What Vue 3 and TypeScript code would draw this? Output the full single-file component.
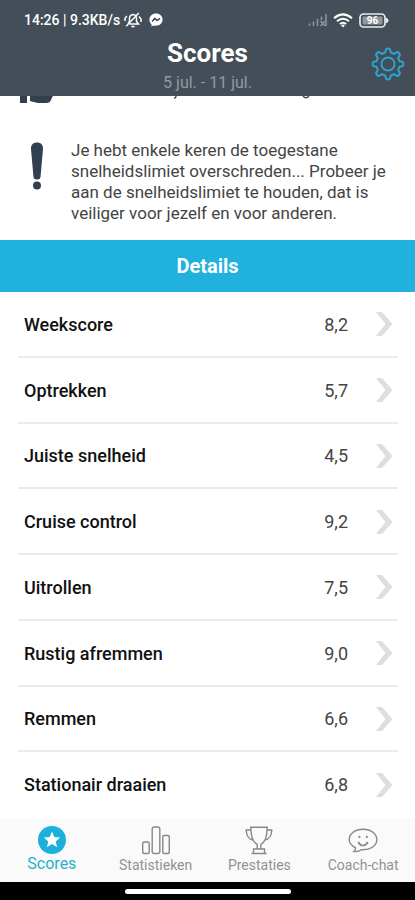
<script setup lang="ts">
interface Score {
  label: string
  value: string
}

const scores: Score[] = [
  { label: 'Weekscore', value: '8,2' },
  { label: 'Optrekken', value: '5,7' },
  { label: 'Juiste snelheid', value: '4,5' },
  { label: 'Cruise control', value: '9,2' },
  { label: 'Uitrollen', value: '7,5' },
  { label: 'Rustig afremmen', value: '9,0' },
  { label: 'Remmen', value: '6,6' },
  { label: 'Stationair draaien', value: '6,8' },
]
</script>

<template>
  <div class="screen">
    <header class="top">
      <div class="status">
        <span>14:26 | 9.3KB/s</span>
        <svg class="bell" viewBox="0 0 20 18" aria-hidden="true">
          <path d="M5 12.5 L6.5 10.5 V7.5 Q6.5 4 10 3.6 Q13.5 4 13.5 7.5 V10.5 L15.5 13 H6.5 M8.5 15 Q10 16.4 11.5 15 M15.8 2 L3.2 15.2 M3.8 5 L2 7.5 V10 M16 5.5 L18 8 V11" />
        </svg>
        <svg class="messenger" viewBox="0 0 14 14" aria-hidden="true">
          <path d="M7 .5 C3.2 .5 .4 3.1 .4 6.6 C.4 8.6 1.2 10.2 2.5 11.3 V13.5 L4.6 12.4 C9.4 13.7 13.6 10.9 13.6 6.6 C13.6 3.1 10.8 .5 7 .5Z" fill="#fff" />
          <path d="M3 8.5 L5.8 5.4 L8 7.5 L11 5.3" fill="none" stroke="#434c55" stroke-width="1.5" />
        </svg>
        <svg class="signal" viewBox="0 0 20 14" aria-hidden="true">
          <path d="M1.5 13 V10.5 M5.5 13 V8.5 M9.5 13 V6 M13.5 7 V3.5 M18 13 V1" />
          <path d="M12.5 8 L17 13 M17 8 L12.5 13" />
        </svg>
        <svg class="wifi" viewBox="0 0 20 15" aria-hidden="true">
          <path d="M1 5.2 Q10 -2.4 19 5.2 M4 8.2 Q10 3.2 16 8.2 M6.8 11 Q10 8.4 13.2 11" />
          <path d="M8 12.2 Q10 10.8 12 12.2 L10 14.6Z" fill="#fff" stroke="none" />
        </svg>
        <svg class="battery" viewBox="0 0 30 15" aria-hidden="true">
          <rect x="1" y="1" width="25" height="13" rx="3.5" fill="none" stroke="#e8ebed" stroke-width="1.7" />
          <rect x="3.5" y="3.5" width="20" height="8" rx="1" fill="#8f979e" />
          <path d="M27 4.8 Q29.5 5.5 29.5 7.5 Q29.5 9.5 27 10.2Z" fill="#e8ebed" />
          <text x="13.5" y="11.2" text-anchor="middle">96</text>
        </svg>
      </div>
      <div class="heading">
        <div class="titles">
          <h1>Scores</h1>
          <p>5 jul. - 11 jul.</p>
        </div>
        <button class="settings" type="button" aria-label="Instellingen">
          <svg viewBox="0 0 34 34" aria-hidden="true">
            <path d="M15 2.2 Q17 .8 19 2.2 L19.8 5.6 Q21.5 6 22.9 6.9 L26 5 Q28.6 5.4 29 8 L27.1 11.1 Q28 12.5 28.4 14.2 L31.8 15 Q33.2 17 31.8 19 L28.4 19.8 Q28 21.5 27.1 22.9 L29 26 Q28.6 28.6 26 29 L22.9 27.1 Q21.5 28 19.8 28.4 L19 31.8 Q17 33.2 15 31.8 L14.2 28.4 Q12.5 28 11.1 27.1 L8 29 Q5.4 28.6 5 26 L6.9 22.9 Q6 21.5 5.6 19.8 L2.2 19 Q.8 17 2.2 15 L5.6 14.2 Q6 12.5 6.9 11.1 L5 8 Q5.4 5.4 8 5 L11.1 6.9 Q12.5 6 14.2 5.6Z" />
            <circle cx="17" cy="17" r="6.5" />
          </svg>
        </button>
      </div>
    </header>

    <main>
      <svg class="scrolled" viewBox="0 0 415 10" aria-hidden="true">
        <path d="M20 0 H27 V7 H20Z M30 0 H53 Q52 1 51 4 Q50 7 46 7 H38 Q33 6 30 5Z" fill="#323f4f" />
        <path d="M176 0 Q176 2 174 2 M303 0 Q306 3.5 309 0" fill="none" stroke="#444" stroke-width="1.4" />
      </svg>

      <section class="advice">
        <svg class="exclaim" viewBox="0 0 14 48" aria-hidden="true">
          <path d="M1 7 C.8 2.6 3.6 .6 7 .6 S13.2 2.6 13 7 L10.5 35 Q10.3 37.5 7 37.5 T3.5 35Z" />
          <circle cx="7" cy="43.5" r="4" />
        </svg>
        <p>Je hebt enkele keren de toegestane snelheidslimiet overschreden... Probeer je aan de snelheidslimiet te houden, dat is veiliger voor jezelf en voor anderen.</p>
      </section>

      <h2>Details</h2>

      <ul class="scores">
        <li v-for="score in scores" :key="score.label">
          <a href="#">
            <span class="label">{{ score.label }}</span>
            <span class="value">{{ score.value }}</span>
            <svg class="chevron" viewBox="0 0 18 26" aria-hidden="true">
              <path d="M1 1 H7 L17.5 13 L7 25 H1 L10.5 13Z" />
            </svg>
          </a>
        </li>
      </ul>
    </main>

    <nav>
      <a class="active" href="#">
        <svg viewBox="0 0 30 30" aria-hidden="true">
          <circle cx="15" cy="15" r="14" fill="#1bb1dc" />
          <path d="M15 6.6 L17.3 12.1 L23.2 12.6 L18.7 16.4 L20.1 22.2 L15 19.1 L9.9 22.2 L11.3 16.4 L6.8 12.6 L12.7 12.1Z" fill="#fff" />
        </svg>
        <span>Scores</span>
      </a>
      <a href="#">
        <svg viewBox="0 0 30 30" aria-hidden="true">
          <rect x="1.7" y="17" width="6.5" height="11.5" rx="1.5" />
          <rect x="11.2" y="2" width="7.6" height="26.5" rx="2" />
          <rect x="21.8" y="10.5" width="6.5" height="18" rx="1.5" />
        </svg>
        <span>Statistieken</span>
      </a>
      <a href="#">
        <svg viewBox="0 0 30 30" aria-hidden="true">
          <path d="M6.8 2.2 H23.2 V3.5 C23 11 21.8 17 16.8 19.3 V24 H13.2 V19.3 C8.2 17 7 11 6.8 3.5Z M9.5 28.5 V24 H20.5 V28.5 M7.5 28.5 H22.5 M7 5 H2.2 C2.4 10.5 4.3 14.2 9.3 15 M23 5 H27.8 C27.6 10.5 25.7 14.2 20.7 15" />
        </svg>
        <span>Prestaties</span>
      </a>
      <a href="#">
        <svg viewBox="0 0 30 30" aria-hidden="true">
          <path d="M7.5 22.7 C3.4 20.8 1.2 18 1.2 14.6 C1.2 8.8 7 4.2 15 4.2 S28.8 8.8 28.8 14.6 C28.8 21 22.3 25.3 13.3 24.7 Q10.2 27 6 26.5 Q8 25 7.5 22.7Z" />
          <path d="M11.4 10.8 V13 M18.8 10.8 V13 M10.2 17 Q12 20.5 15 20.5 T19.8 17" stroke-width="1.7" />
        </svg>
        <span>Coach-chat</span>
      </a>
    </nav>
    <div class="home"><i></i></div>
  </div>
</template>

<style>
body {
  margin: 0;
}
</style>

<style scoped>
.screen {
  display: flex;
  flex-direction: column;
  min-height: 100vh;
  background: #fff;
  color: #111;
  font-family: Roboto, "Liberation Sans", sans-serif;
}
.top {
  background: #434e58;
  color: #fff;
}
.status {
  display: flex;
  align-items: center;
  height: 24px;
  padding: 8px 26px 4px 24px;
  font-size: 14px;
  font-weight: 500;
}
.bell {
  width: 20px;
  height: 18px;
  margin-left: 3px;
  fill: none;
  stroke: #fff;
  stroke-width: 1.5;
}
.messenger {
  width: 14px;
  height: 14px;
  margin-left: 6px;
}
.signal {
  width: 20px;
  height: 14px;
  margin-left: auto;
  fill: none;
  stroke: #8b949b;
  stroke-width: 1.6;
}
.wifi {
  width: 20px;
  height: 15px;
  margin-left: 5px;
  fill: none;
  stroke: #fff;
  stroke-width: 2;
}
.battery {
  width: 30px;
  height: 15px;
  margin-left: 6px;
}
.battery text {
  fill: #fff;
  font-size: 10px;
  font-weight: 700;
}
.heading {
  display: grid;
  grid-template-columns: 1fr auto 1fr;
  align-items: start;
  height: 60px;
  padding: 0 10px;
}
.titles {
  grid-column: 2;
  text-align: center;
}
h1 {
  margin: 0;
  font-size: 26px;
  line-height: 34px;
  font-weight: 700;
}
.titles p {
  margin: 0;
  color: #919aa2;
  font-size: 16px;
  line-height: 26px;
}
.settings {
  justify-self: end;
  width: 34px;
  height: 34px;
  margin-top: 11px;
  padding: 0;
  border: 0;
  background: none;
}
.settings svg {
  display: block;
  fill: none;
  stroke: #2ba4cf;
  stroke-width: 2;
  stroke-linejoin: round;
}
main {
  display: flex;
  flex: 1;
  flex-direction: column;
}
.scrolled {
  display: block;
  width: 100%;
}
.advice {
  display: flex;
  gap: 27px;
  padding: 34px 20px 16px 30px;
}
.exclaim {
  flex: none;
  width: 14px;
  height: 48px;
  margin-top: 2px;
  fill: #323f4f;
}
.advice p {
  margin: 0;
  color: #444;
  font-size: 17px;
  line-height: 21px;
}
h2 {
  margin: 0;
  background: #20b1df;
  color: #fff;
  font-size: 20px;
  line-height: 52px;
  font-weight: 700;
  text-align: center;
}
.scores {
  display: flex;
  flex: 1;
  flex-direction: column;
  margin: 0;
  padding: 0 17px 0 18px;
  list-style: none;
}
.scores li {
  display: flex;
  flex: 1;
  min-height: 48px;
  box-sizing: border-box;
  border-bottom: 2px solid #ebebeb;
}
.scores li:last-child {
  border-bottom-color: transparent;
}
.scores a {
  display: flex;
  flex: 1;
  align-items: center;
  padding: 1px 5px 0 6px;
  color: inherit;
  text-decoration: none;
}
.label {
  flex: 1;
  font-size: 18px;
  font-weight: 500;
}
.value {
  color: #444;
  font-size: 18px;
}
.chevron {
  width: 18px;
  height: 26px;
  margin-left: 27px;
  fill: #dedede;
}
nav {
  display: grid;
  grid-template-columns: repeat(4, 1fr);
  height: 64px;
  background: #fafafa;
}
nav a {
  display: flex;
  flex-direction: column;
  align-items: center;
  padding-top: 7px;
  color: #929292;
  font-size: 14px;
  line-height: 20px;
  text-decoration: none;
}
nav svg {
  width: 30px;
  height: 30px;
  fill: none;
  stroke: #888;
  stroke-width: 1.4;
}
nav .active {
  color: #25b1c9;
  font-size: 16px;
  line-height: 18px;
}
nav .active svg {
  stroke: none;
}
.home {
  display: flex;
  align-items: center;
  justify-content: center;
  height: 18px;
  background: #000;
}
.home i {
  width: 40%;
  height: 5px;
  border-radius: 3px;
  background: #fff;
}
</style>
